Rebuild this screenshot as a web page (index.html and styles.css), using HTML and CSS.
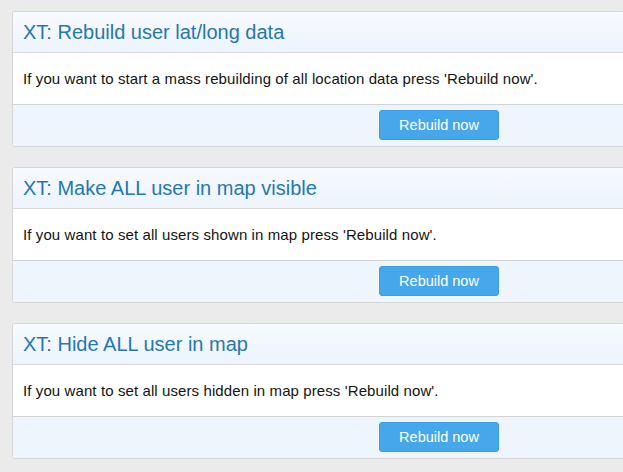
FILE: index.html
```html
<!DOCTYPE html>
<html>
<head>
<meta charset="utf-8">
<link rel="stylesheet" href="styles.css">
</head>
<body>
<div class="page">
  <section class="panel">
    <h2 class="panel-head">XT: Rebuild user lat/long data</h2>
    <div class="panel-body">If you want to start a mass rebuilding of all location data press 'Rebuild now'.</div>
    <div class="panel-foot"><button class="btn">Rebuild now</button></div>
  </section>
  <section class="panel">
    <h2 class="panel-head">XT: Make ALL user in map visible</h2>
    <div class="panel-body">If you want to set all users shown in map press 'Rebuild now'.</div>
    <div class="panel-foot"><button class="btn">Rebuild now</button></div>
  </section>
  <section class="panel">
    <h2 class="panel-head">XT: Hide ALL user in map</h2>
    <div class="panel-body">If you want to set all users hidden in map press 'Rebuild now'.</div>
    <div class="panel-foot"><button class="btn">Rebuild now</button></div>
  </section>
</div>
</body>
</html>
```
FILE: styles.css
```css
html {
  overflow: hidden;
}
body {
  margin: 0;
  background: #ebebeb;
  font-family: "Liberation Sans", Arial, Helvetica, sans-serif;
}
.page {
  padding: 11px 0 0 12px;
  display: flex;
  flex-direction: column;
  gap: 20px;
  width: 900px;
}
.panel {
  background: #fff;
  border: 1px solid #d6d6d6;
  border-radius: 3px;
  overflow: hidden;
}
.panel-head {
  margin: 0;
  padding: 8px 10px;
  font-size: 20px;
  line-height: 24px;
  font-weight: normal;
  color: #2577b1;
  background: linear-gradient(#f7fafe, #edf4fd);
  border-bottom: 1px solid #d8d8d8;
}
.panel-body {
  padding: 16px 10px;
  font-size: 15px;
  line-height: 19px;
  letter-spacing: 0.1px;
  color: #141414;
  border-bottom: 1px solid #d3d3d3;
}
.panel-foot {
  background: #eef5fd;
  padding: 5px 0 6px 366px;
  display: flex;
}
.btn {
  width: 120px;
  height: 30px;
  background: #47a7eb;
  border: 1px solid #3d9de2;
  border-radius: 3px;
  color: #fff;
  font-family: "Liberation Sans", Arial, Helvetica, sans-serif;
  font-size: 14.5px;
  padding: 0;
}
```
